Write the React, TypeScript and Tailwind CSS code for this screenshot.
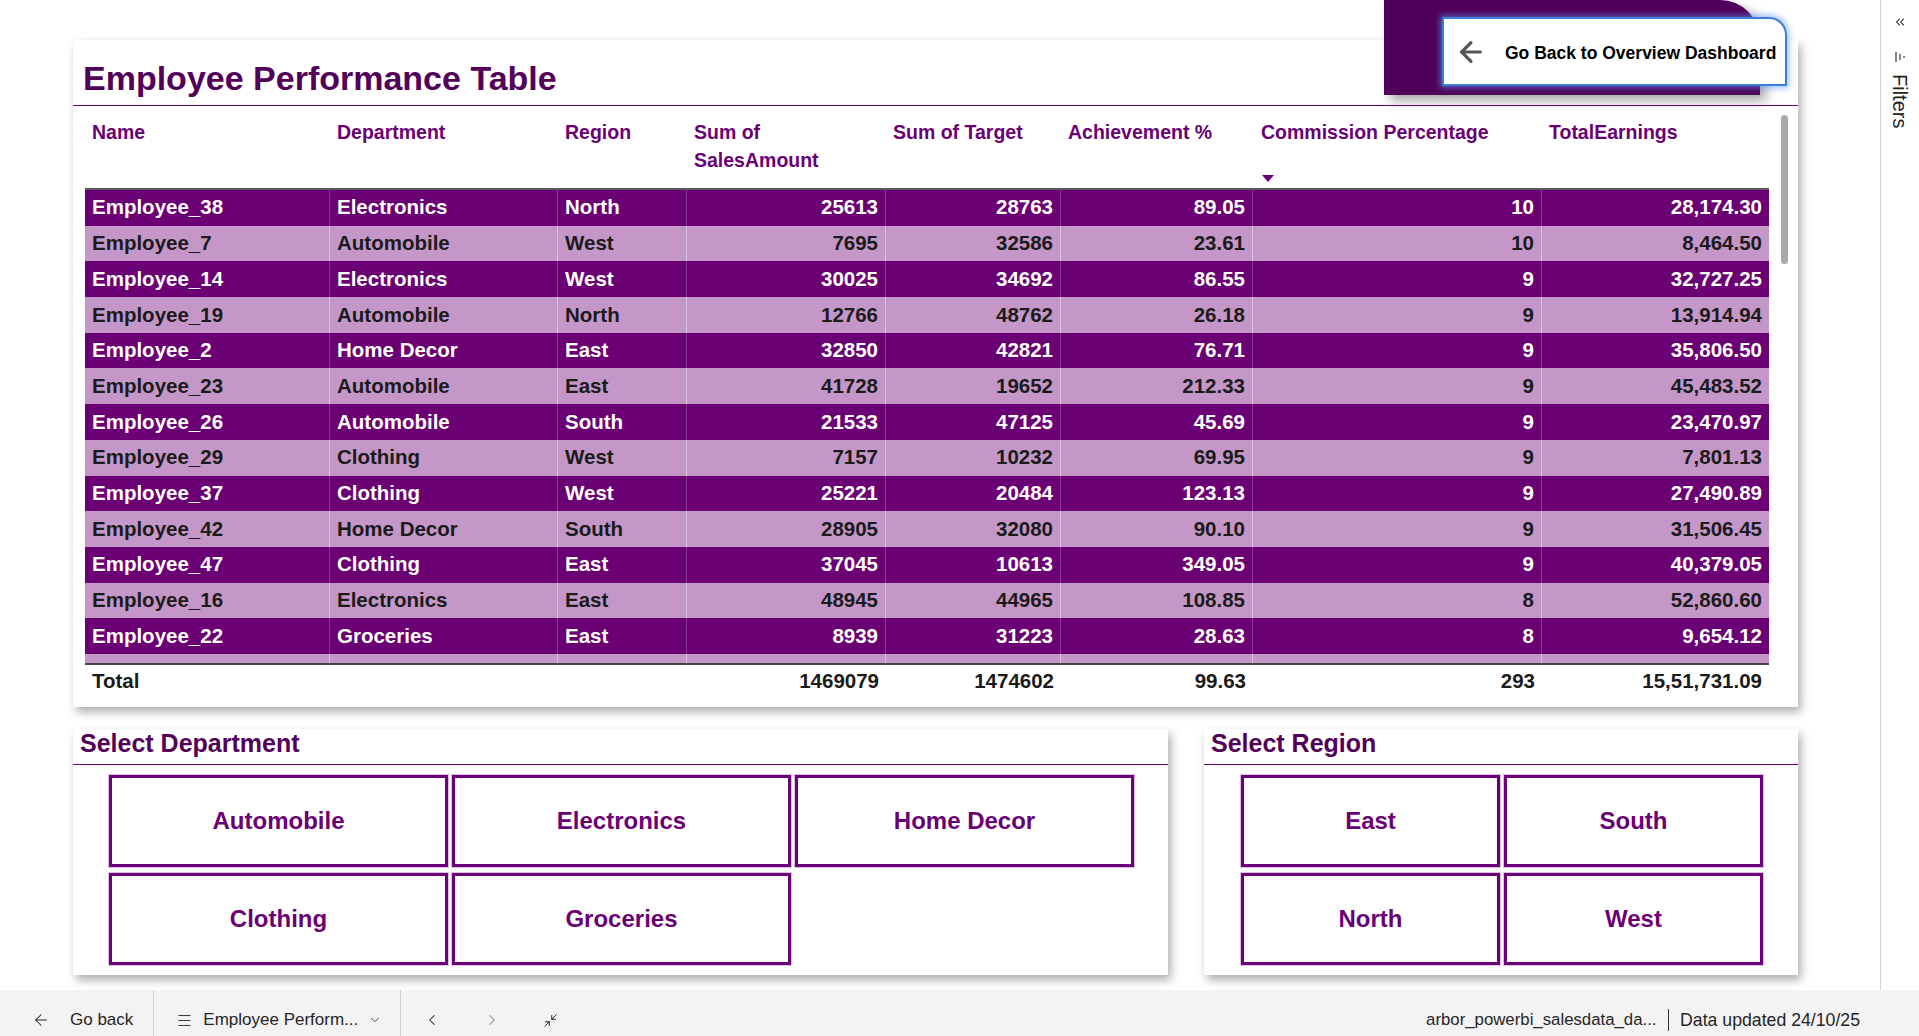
import React from "react";
import { ArrowLeft, ChevronDown, ChevronLeft, ChevronRight, ChevronsLeft, Menu, Minimize2 } from "lucide-react";

interface Row {
  name: string;
  dept: string;
  region: string;
  sales: string;
  target: string;
  ach: string;
  comm: string;
  total: string;
}

const ROWS: Row[] = [
  { name: "Employee_38", dept: "Electronics", region: "North", sales: "25613", target: "28763", ach: "89.05", comm: "10", total: "28,174.30" },
  { name: "Employee_7", dept: "Automobile", region: "West", sales: "7695", target: "32586", ach: "23.61", comm: "10", total: "8,464.50" },
  { name: "Employee_14", dept: "Electronics", region: "West", sales: "30025", target: "34692", ach: "86.55", comm: "9", total: "32,727.25" },
  { name: "Employee_19", dept: "Automobile", region: "North", sales: "12766", target: "48762", ach: "26.18", comm: "9", total: "13,914.94" },
  { name: "Employee_2", dept: "Home Decor", region: "East", sales: "32850", target: "42821", ach: "76.71", comm: "9", total: "35,806.50" },
  { name: "Employee_23", dept: "Automobile", region: "East", sales: "41728", target: "19652", ach: "212.33", comm: "9", total: "45,483.52" },
  { name: "Employee_26", dept: "Automobile", region: "South", sales: "21533", target: "47125", ach: "45.69", comm: "9", total: "23,470.97" },
  { name: "Employee_29", dept: "Clothing", region: "West", sales: "7157", target: "10232", ach: "69.95", comm: "9", total: "7,801.13" },
  { name: "Employee_37", dept: "Clothing", region: "West", sales: "25221", target: "20484", ach: "123.13", comm: "9", total: "27,490.89" },
  { name: "Employee_42", dept: "Home Decor", region: "South", sales: "28905", target: "32080", ach: "90.10", comm: "9", total: "31,506.45" },
  { name: "Employee_47", dept: "Clothing", region: "East", sales: "37045", target: "10613", ach: "349.05", comm: "9", total: "40,379.05" },
  { name: "Employee_16", dept: "Electronics", region: "East", sales: "48945", target: "44965", ach: "108.85", comm: "8", total: "52,860.60" },
  { name: "Employee_22", dept: "Groceries", region: "East", sales: "8939", target: "31223", ach: "28.63", comm: "8", total: "9,654.12" },
];

const COLS = "grid grid-cols-[245px_228px_129px_199px_175px_192px_289px_227px]";

function TableBlock() {
  return (
    <div className="w-[1725px] h-[667px] bg-white shadow-[3px_5px_9px_rgba(0,0,0,0.32)] flex flex-col shrink-0">
      <div className="h-[66px] pt-[18px] pl-[10px] border-b border-[#6a0075] shrink-0">
        <h1 className="text-[34px] leading-[40px] font-bold text-[#52005a]">Employee Performance Table</h1>
      </div>

      <div className="flex pl-[12px] gap-[12px]">
        <div className="w-[1684px]">
          {/* header */}
          <div className={`${COLS} h-[82px] pt-[12px] text-[19.5px] leading-[28px] font-bold text-[#6a0075]`}>
            <div className="px-[7px]">Name</div>
            <div className="px-[7px]">Department</div>
            <div className="px-[7px]">Region</div>
            <div className="px-[7px]">
              Sum of
              <br />
              SalesAmount
            </div>
            <div className="px-[7px]">Sum of Target</div>
            <div className="px-[7px]">Achievement %</div>
            <div className="px-[8px]">
              Commission Percentage
              <svg width="12" height="8" viewBox="0 0 12 8" className="mt-[29px] ml-[1px]">
                <path d="M0 0 L12 0 L6 7 Z" fill="#6a0075" />
              </svg>
            </div>
            <div className="px-[7px]">TotalEarnings</div>
          </div>

          {/* body */}
          <div className="border-t-2 border-[#595959] h-[475px] overflow-hidden">
            {ROWS.map((r, i) => {
              const dark = i % 2 === 0;
              const rowCls = dark ? "bg-[#6a0073] text-white" : "bg-[#c497c8] text-[#1b1b1b]";
              const sep = dark ? "border-r border-[#ffffff38]" : "border-r border-[#ffffff66]";
              return (
                <div key={r.name} className={`${COLS} h-[35.7px] text-[20.5px] font-bold ${rowCls}`}>
                  <div className={`px-[7px] flex items-center ${sep}`}>{r.name}</div>
                  <div className={`px-[7px] flex items-center ${sep}`}>{r.dept}</div>
                  <div className={`px-[7px] flex items-center ${sep}`}>{r.region}</div>
                  <div className={`px-[7px] flex items-center justify-end ${sep}`}>{r.sales}</div>
                  <div className={`px-[7px] flex items-center justify-end ${sep}`}>{r.target}</div>
                  <div className={`px-[7px] flex items-center justify-end ${sep}`}>{r.ach}</div>
                  <div className={`px-[7px] flex items-center justify-end ${sep}`}>{r.comm}</div>
                  <div className="px-[7px] flex items-center justify-end">{r.total}</div>
                </div>
              );
            })}
            {/* next row, scrolled out of view */}
            <div className={`${COLS} h-[35.7px] bg-[#c497c8]`}>
              <div className="border-r border-[#ffffff66]" />
              <div className="border-r border-[#ffffff66]" />
              <div className="border-r border-[#ffffff66]" />
              <div className="border-r border-[#ffffff66]" />
              <div className="border-r border-[#ffffff66]" />
              <div className="border-r border-[#ffffff66]" />
              <div className="border-r border-[#ffffff66]" />
              <div />
            </div>
          </div>

          {/* total */}
          <div className={`${COLS} border-t-2 border-[#474747] h-[34px] text-[20.5px] font-bold text-[#1b1b1b]`}>
            <div className="px-[7px] flex items-center">Total</div>
            <div />
            <div />
            <div className="px-[7px] flex items-center justify-end">1469079</div>
            <div className="px-[7px] flex items-center justify-end">1474602</div>
            <div className="px-[7px] flex items-center justify-end">99.63</div>
            <div className="px-[7px] flex items-center justify-end">293</div>
            <div className="px-[7px] flex items-center justify-end">15,51,731.09</div>
          </div>
        </div>

        {/* scrollbar */}
        <div className="w-[7px] pt-[9px]">
          <div className="h-[149px] w-[7px] rounded-full bg-[#a9a9a9]" />
        </div>
      </div>
    </div>
  );
}

function SlicerButton({ label, w }: { label: string; w: string }) {
  return (
    <button
      type="button"
      className={`${w} h-[92px] border-[3px] border-[#6b0078] shadow-[0_0_0_1px_#dcc2e0] bg-white text-[24px] font-bold text-[#6a0075] flex items-center justify-center`}
    >
      {label}
    </button>
  );
}

function Slicer({ title, items, cols, w, btnW, padL }: { title: string; items: string[]; cols: string; w: string; btnW: string; padL: string }) {
  return (
    <div className={`${w} h-[246px] bg-white shadow-[3px_5px_9px_rgba(0,0,0,0.32)] flex flex-col`}>
      <div className="h-[36px] border-b border-[#6a0075] pl-[7px]">
        <h2 className="text-[25px] leading-[28px] font-bold text-[#52005a]">{title}</h2>
      </div>
      <div className={`pt-[10px] ${padL} ${cols} gap-x-[4px] gap-y-[6px]`}>
        {items.map((it) => (
          <SlicerButton key={it} label={it} w={btnW} />
        ))}
      </div>
    </div>
  );
}

export default function App() {
  return (
    <div className="relative w-[1919px] h-[1036px] overflow-hidden bg-white font-['Liberation_Sans',Arial,sans-serif]">
      <div className="flex h-[990px]">
        <div className="w-[1880px] pl-[73px] pt-[40px] flex flex-col">
          <TableBlock />
          <div className="mt-[22px] flex gap-[36px]">
            <Slicer
              title="Select Department"
              items={["Automobile", "Electronics", "Home Decor", "Clothing", "Groceries"]}
              cols="grid grid-cols-[339px_339px_339px]"
              w="w-[1095px]"
              btnW="w-[339px]"
              padL="pl-[36px]"
            />
            <Slicer
              title="Select Region"
              items={["East", "South", "North", "West"]}
              cols="grid grid-cols-[259px_259px]"
              w="w-[594px]"
              btnW="w-[259px]"
              padL="pl-[37px]"
            />
          </div>
        </div>

        {/* filters pane */}
        <div className="w-[39px] border-l border-[#d4d4d4] flex flex-col items-center pt-[15px] text-[#222]">
          <ChevronsLeft size={14} strokeWidth={1.8} />
          <svg width="12" height="12" viewBox="0 0 12 12" className="mt-[22px]">
            <path d="M2 1 V11 M6 3 V9 M10 5 V7" stroke="#333" strokeWidth="1.2" />
          </svg>
          <span className="mt-[11px] text-[20px] leading-[22px] [writing-mode:vertical-rl]">Filters</span>
        </div>
      </div>

      {/* bottom bar */}
      <div className="h-[46px] bg-[#f3f3f3] flex items-stretch text-[17px] text-[#252525]">
        <div className="flex items-center pl-[32px] pr-[20px] pt-[14px]">
          <ArrowLeft size={18} strokeWidth={1.4} />
          <span className="ml-[20px]">Go back</span>
        </div>
        <div className="w-px bg-[#d2d2d2]" />
        <div className="flex items-center pl-[22px] pr-[18px] pt-[14px]">
          <Menu size={17} strokeWidth={1.3} />
          <span className="ml-[10px]">Employee Perform...</span>
          <ChevronDown size={14} strokeWidth={1.4} className="ml-[10px]" />
        </div>
        <div className="w-px bg-[#d2d2d2]" />
        <div className="flex items-center pl-[22px] gap-[42px] pt-[14px]">
          <ChevronLeft size={18} strokeWidth={1.4} />
          <ChevronRight size={18} strokeWidth={1.4} className="text-[#8a8a8a]" />
          <Minimize2 size={15} strokeWidth={1.6} />
        </div>
        <div className="ml-auto flex items-center pr-[59px] pt-[14px]">
          <span className="text-[16.8px]">arbor_powerbi_salesdata_da...</span>
          <span className="mx-[11px] h-[22px] w-[1.5px] bg-[#333]" />
          <span className="text-[17.7px]">Data updated 24/10/25</span>
        </div>
      </div>

      {/* go back button overlay */}
      <div className="absolute left-[1384px] top-0 w-[376px] h-[95px] bg-[#4f0058] rounded-tr-[40px] shadow-[6px_6px_12px_rgba(0,0,0,0.35)]" />
      <button
        type="button"
        className="absolute left-[1442px] top-[17px] w-[345px] h-[69px] bg-white border-2 border-[#3d7fd8] rounded-tr-[18px] shadow-[0_0_6px_2px_rgba(90,150,255,0.6)] flex items-center pl-[11px] pt-[4px]"
      >
        <ArrowLeft size={32} strokeWidth={2.4} className="text-[#555] -mt-[4px]" />
        <span className="ml-[18px] text-[17.5px] font-bold text-black whitespace-nowrap">Go Back to Overview Dashboard</span>
      </button>
    </div>
  );
}
